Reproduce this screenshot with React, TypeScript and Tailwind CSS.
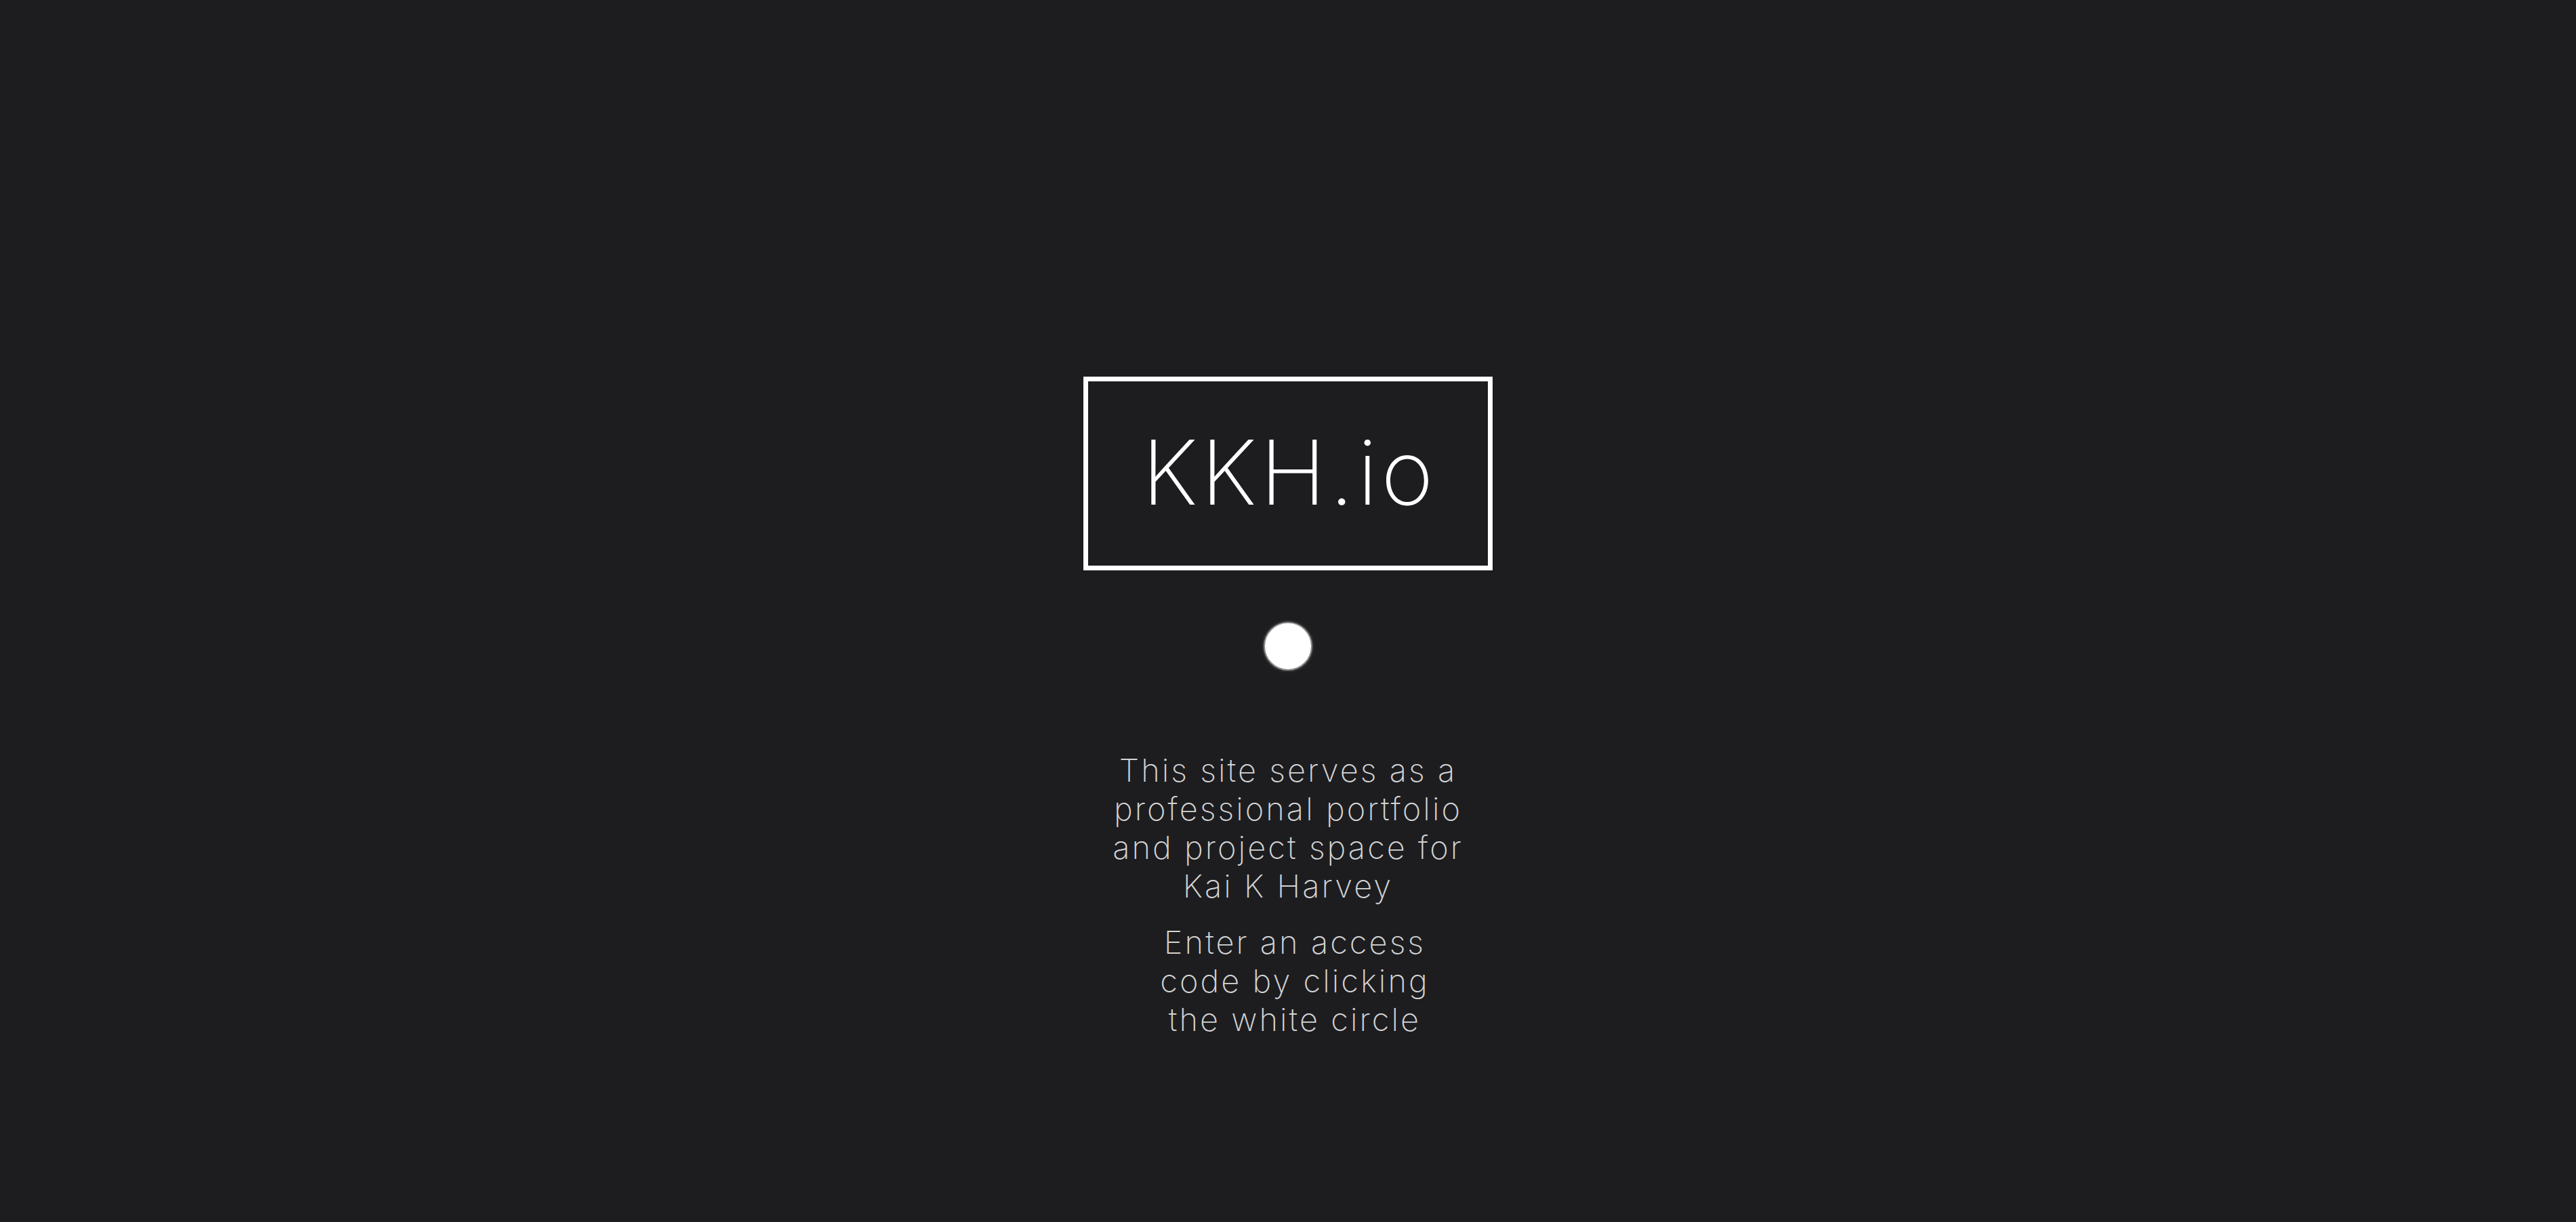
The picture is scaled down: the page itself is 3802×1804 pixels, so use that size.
export default function App() {
	return (
		<div
			className="min-h-screen w-full bg-[#1d1d20] flex flex-col items-center pt-[556px] text-[#d4d4d4]"
			style={{ fontFamily: "Inter, 'Noto Sans', sans-serif" }}
		>
			<div className="w-[604px] h-[286px] border-[7px] border-white flex items-center justify-center">
				<span className="text-[132px] leading-none font-extralight text-white tracking-[5px] -mt-[4px] pl-[4px]">
					KKH.io
				</span>
			</div>

			<button
				type="button"
				className="mt-[76px] w-[72px] h-[72px] rounded-full bg-white border-[2px] border-[#8a8a8a] shadow-[0_0_4px_rgba(255,255,255,0.3)]"
				aria-label="Enter access code"
			/>

			<div className="mt-[118px] flex flex-col items-center text-[47px] leading-[57px] font-extralight text-center tracking-[3px]">
				<p>
					This site serves as a
					<br />
					professional portfolio
					<br />
					and project space for
					<br />
					Kai K Harvey
				</p>
				<p className="mt-[26px] pl-[20px]">
					Enter an access
					<br />
					code by clicking
					<br />
					the white circle
				</p>
			</div>
		</div>
	);
}
